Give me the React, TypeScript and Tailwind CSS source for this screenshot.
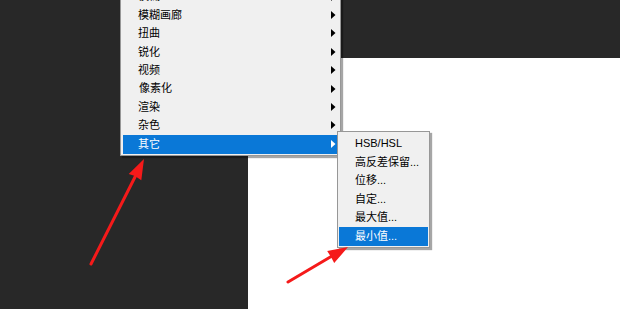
const font = "font-['Liberation_Sans','Noto_Sans_CJK_SC',sans-serif]";

const mainItems = ["模糊", "模糊画廊", "扭曲", "锐化", "视频", "像素化", "渲染", "杂色"];
const subItems = ["HSB/HSL", "高反差保留...", "位移...", "自定...", "最大值..."];

function Caret({ light }: { light?: boolean }) {
  return (
    <svg width="5" height="8" viewBox="0 0 5 8" className="shrink-0">
      <path d="M0 0 L4.5 4 L0 8 Z" fill={light ? "#ffffff" : "#000000"} />
    </svg>
  );
}

export default function App() {
  return (
    <div className={`relative flex h-[309px] w-[620px] overflow-hidden bg-[#282828] ${font}`}>
      {/* left dark panel */}
      <div className="w-[248px] shrink-0" />
      {/* document area */}
      <div className="flex flex-1 flex-col">
        <div className="h-[58px]" />
        <div className="flex-1 bg-white" />
      </div>

      {/* filter menu, scrolled so its top runs off screen */}
      <div className="absolute left-[120px] top-[-14.5px] w-[221px] border border-[#979797] bg-[#f0f0f0] px-[2px] pb-[1px] pt-[1px] shadow-[2px_2px_1px_rgba(0,0,0,0.35)]">
        {mainItems.map((label) => (
          <div key={label} className="flex h-[18.4px] items-center justify-between pl-[15px] pr-[2px] text-[11px] text-black">
            <span className={label === "像素化" ? "pl-[1px]" : ""}>{label}</span>
            <Caret />
          </div>
        ))}
        <div className="flex h-[19px] items-center justify-between bg-[#0a78d7] pl-[15px] pr-[2px] text-[11px] text-white">
          <span>其它</span>
          <Caret light />
        </div>
      </div>

      {/* submenu */}
      <div className="absolute left-[337px] top-[131px] w-[93px] border border-[#979797] bg-[#f0f0f0] px-[1px] pb-[1px] pt-[2px] shadow-[2px_2px_1px_rgba(0,0,0,0.35)]">
        {subItems.map((label) => (
          <div key={label} className="flex h-[18.6px] items-center pl-[16px] text-[11px] text-black">
            {label}
          </div>
        ))}
        <div className="flex h-[19px] items-center bg-[#0a78d7] pl-[16px] text-[11px] text-white">最小值...</div>
      </div>

      {/* red annotation arrows */}
      <svg className="pointer-events-none absolute inset-0" width="620" height="309" viewBox="0 0 620 309">
        <line x1="91" y1="264" x2="136" y2="175" stroke="#f51a1a" strokeWidth="3" strokeLinecap="round" />
        <polygon points="144,159 141.3,180.2 135,176 128.7,173.9" fill="#f51a1a" />
        <line x1="288" y1="282" x2="332" y2="256" stroke="#f51a1a" strokeWidth="3" strokeLinecap="round" />
        <polygon points="348,247 334.2,263.1 331,257 327.2,251.1" fill="#f51a1a" />
      </svg>
    </div>
  );
}
